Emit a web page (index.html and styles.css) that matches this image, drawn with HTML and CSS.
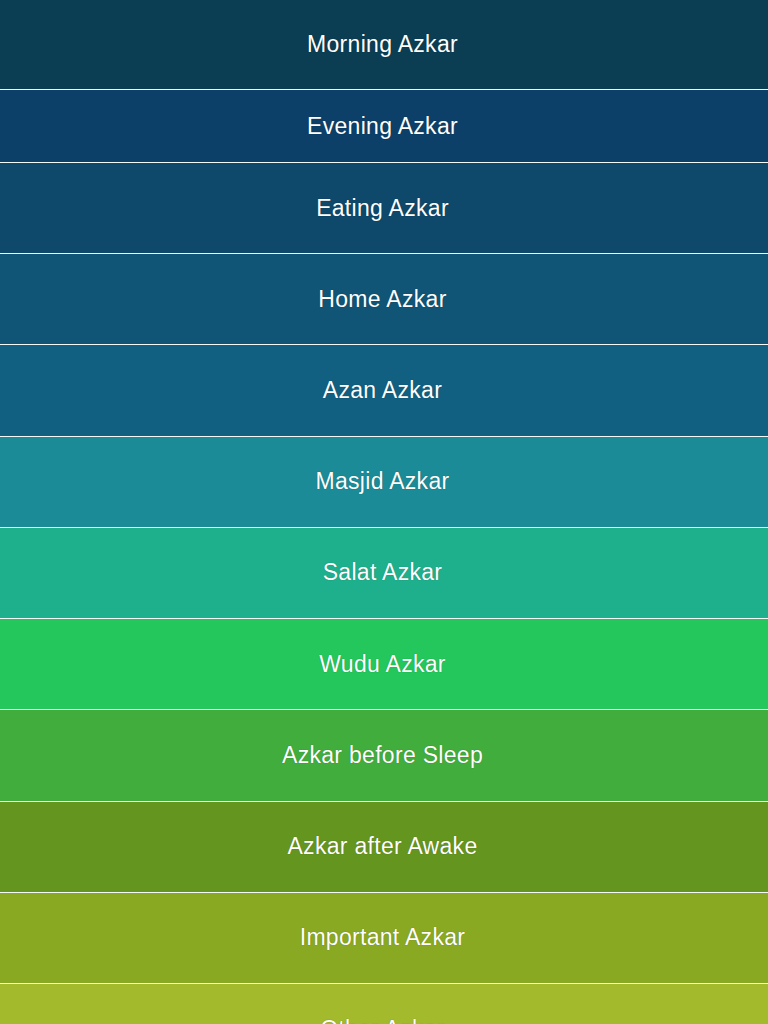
FILE: index.html
```html
<html>

<head>
    <meta name="viewport" content="width=device-width, initial-scale=1.0, maximum-scale=1.0">
    <link rel="stylesheet" href="styles.css">
</head>

<body>
    <div class="menu">
        <a class="item first _1">Morning Azkar</a>
        <a class="item second _2">Evening Azkar</a>
        <a class="item third _3">Eating Azkar</a>
        <a class="item _4">Home Azkar</a>
        <a class="item _5">Azan Azkar</a>
        <a class="item _6">Masjid Azkar</a>
        <a class="item _7">Salat Azkar</a>
        <a class="item _8">Wudu Azkar</a>
        <a class="item _9">Azkar before Sleep</a>
        <a class="item _10">Azkar after Awake</a>
        <a class="item _11">Important Azkar</a>
        <a class="item _12">Other Azkar</a>
    </div>
</body>

</html>
```

FILE: styles.css
```css
body {
    margin: 0;
    font-family: "Liberation Sans", Arial, sans-serif;
    overflow: hidden;
}

.menu {
    display: flex;
    flex-direction: column;
}

.menu .item {
    display: flex;
    justify-content: center;
    align-items: center;
    flex-shrink: 0;
    height: 90.25px;
    padding-right: 3px;
    border-bottom: 1px solid #f4f8f8;
    color: #ffffff;
    font-size: 23px;
    letter-spacing: 0.3px;
    text-shadow: 0 0 1px rgba(0, 0, 0, 0.35);
}

.menu .first {
    height: 89px;
}

.menu .second {
    height: 72px;
}

.menu .third {
    height: 90px;
}

._1 { background: #0b3d53; }
._2 { background: #0c4068; }
._3 { background: #0e486a; }
._4 { background: #105476; }
._5 { background: #115f81; }
._6 { background: #1a8b97; }
._7 { background: #1eb08c; }
._8 { background: #23c75b; }
._9 { background: #41ad3c; }
._10 { background: #64951f; }
._11 { background: #8aa922; }
._12 { background: #a2ba2c; }
```
